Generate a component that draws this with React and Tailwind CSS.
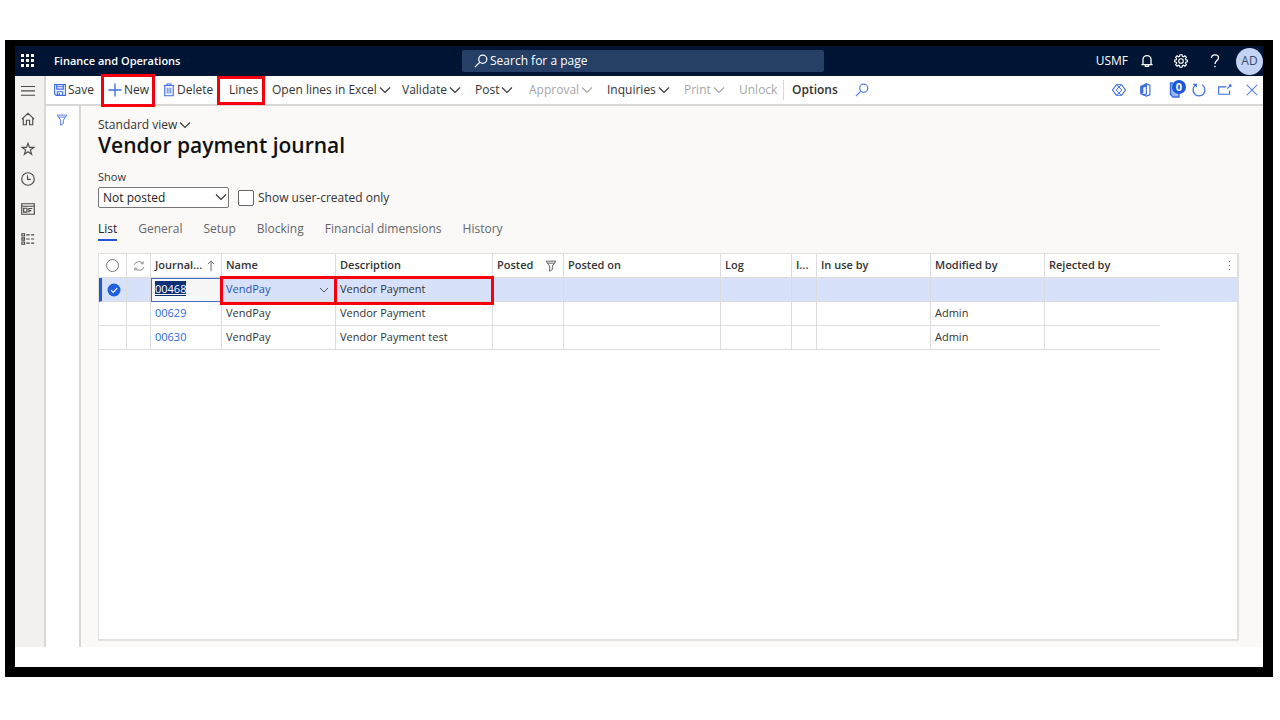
import { useState } from 'react'

function Svg({ size = 'size-4', children, className = '', box = 16 }) {
  return (
    <svg
      viewBox={`0 0 ${box} ${box}`}
      className={`${size} shrink-0 ${className}`}
      fill="none"
      stroke="currentColor"
      strokeWidth="1.1"
      aria-hidden="true"
    >
      {children}
    </svg>
  )
}

const Chevron = ({ className = '' }) => (
  <svg viewBox="0 0 12 8" className={`h-2 w-3 shrink-0 ${className}`} fill="none" stroke="currentColor" strokeWidth="1.1" aria-hidden="true">
    <path d="M1 1.5 6 6.5 11 1.5" />
  </svg>
)

const Funnel = ({ className = '' }) => (
  <Svg size="size-3" className={className}>
    <path d="M1.5 1.5h13L9.8 8.2v4.6L6.2 15V8.2z M3.4 4.2h9.2" strokeWidth="1.2" />
  </Svg>
)

const Magnifier = ({ className = '' }) => (
  <Svg size="size-3.5" className={className}>
    <circle cx="10" cy="6" r="4.6" strokeWidth="1.4" />
    <path d="M6.6 9.4 1 15" strokeWidth="1.4" />
  </Svg>
)

const Highlight = ({ className }) => (
  <span className={`pointer-events-none absolute z-10 border-3 border-[#f5000c] ${className}`} />
)

const commands = [
  {
    label: 'Save',
    width: 'w-[54px]',
    icon: (
      <Svg size="size-3">
        <path d="M.8.8h14.4v14.4H3L.8 13z M3.6.8v6h8.8v-6 M4.4 15v-4.6h7.2V15 M7 12v3 M3.6 3.6h8.8" strokeWidth="1.5" />
      </Svg>
    ),
  },
  {
    label: 'New',
    width: 'w-[55px]',
    mark: '-left-[7px] -top-0.5 h-[33px] w-[54px]',
    icon: (
      <Svg size="size-3.5">
        <path d="M8 .5v15M.5 8h15" strokeWidth="1.5" />
      </Svg>
    ),
  },
  {
    label: 'Delete',
    width: 'w-[66px]',
    icon: (
      <Svg size="h-3.5 w-3">
        <path d="M1 2h14 M5.4 1.8V0h5.2v1.8 M2.4 2.2v13.4h11.2V2.2" strokeWidth="1.5" />
        <path d="M5.6 4.8v8M8 4.8v8M10.4 4.8v8" strokeWidth="1.2" />
      </Svg>
    ),
  },
  { label: 'Lines', width: 'w-[43px]', mark: '-left-3 top-0 h-[29px] w-12' },
  { label: 'Open lines in Excel', width: 'w-[130px]', menu: true },
  { label: 'Validate', width: 'w-[73px]', menu: true },
  { label: 'Post', width: 'w-[54px]', menu: true },
  { label: 'Approval', width: 'w-[78px]', menu: true, disabled: true },
  { label: 'Inquiries', width: 'w-[77px]', menu: true },
  { label: 'Print', width: 'w-[55px]', menu: true, disabled: true },
  { label: 'Unlock', width: 'w-11', disabled: true },
]

const tabs = ['List', 'General', 'Setup', 'Blocking', 'Financial dimensions', 'History']

const journals = [
  { number: '00468', name: 'VendPay', description: 'Vendor Payment', modifiedBy: '' },
  { number: '00629', name: 'VendPay', description: 'Vendor Payment', modifiedBy: 'Admin' },
  { number: '00630', name: 'VendPay', description: 'Vendor Payment test', modifiedBy: 'Admin' },
]

function TopBar() {
  return (
    <header className="flex h-[30px] items-center bg-[#001433] text-white">
      <div className="flex flex-1 items-center">
        <button aria-label="App launcher" className="ml-1.5 flex size-4 items-center">
          <svg viewBox="0 0 14 14" className="size-3.5" fill="currentColor" aria-hidden="true">
            {[0, 5, 10].map((y) => [0, 5, 10].map((x) => <rect key={`${x}-${y}`} x={x} y={y} width="3" height="3" />))}
          </svg>
        </button>
        <span className="ml-[17px] text-[11px] font-semibold">Finance and Operations</span>
      </div>
      <label className="ml-2 flex h-[22px] w-[362px] items-center gap-0.5 rounded-xs bg-[#253f66] pl-3">
        <Magnifier />
        <input
          type="text"
          aria-label="Search for a page"
          placeholder="Search for a page"
          className="min-w-0 flex-1 bg-transparent text-xs outline-none placeholder:text-white"
        />
      </label>
      <div className="flex flex-1 items-center justify-end">
        <span className="text-xs">USMF</span>
        <button aria-label="Notifications" className="ml-3">
          <Svg size="size-3.5">
            <path d="M3.4 12V6.4a4.6 4.6 0 0 1 9.2 0V12 M1.6 12.2h12.8 M6.2 12.4v1.8h3.6v-1.8" strokeWidth="1.5" />
          </Svg>
        </button>
        <button aria-label="Settings" className="ml-5">
          <Svg size="size-3.5">
            <path
              d="M6.8.8h2.4l.4 1.9 1.2.5 1.7-1.1 1.6 1.6-1.1 1.7.5 1.2 1.9.4v2l-1.9.4-.5 1.2 1.1 1.7-1.6 1.6-1.7-1.1-1.2.5-.4 1.9H6.8l-.4-1.9-1.2-.5-1.7 1.1-1.6-1.6L3 10.6l-.5-1.2L.6 9V7l1.9-.4L3 5.4 1.9 3.7l1.6-1.6 1.7 1.1 1.2-.5z"
              strokeWidth="1.3"
            />
            <circle cx="8" cy="8" r="2.6" strokeWidth="1.3" />
          </Svg>
        </button>
        <button aria-label="Help" className="ml-5">
          <Svg size="size-3.5">
            <path d="M4 4.6C4 2.3 5.6 1 8 1s4 1.4 4 3.5C12 7.5 8 7.5 8 11.5 M8 13.4v1.8" strokeWidth="1.5" />
          </Svg>
        </button>
        <button className="ml-3.5 flex size-[27px] items-center justify-center rounded-full bg-[#c3d3f5] text-xs text-[#3a4a6a]">AD</button>
      </div>
    </header>
  )
}

function SideNav() {
  const button = 'flex h-[30px] w-full items-center justify-center'
  return (
    <nav aria-label="Main" className="w-[31px] shrink-0 border-r-2 border-[#d8d7d6] bg-[#f2f1f0] pr-1 text-[#4a4a4a]">
      <button aria-label="Expand menu" className="flex h-7 w-full items-center justify-center">
        <Svg size="size-3.5">
          <path d="M0 4h16M0 9h16M0 14h16" strokeWidth="1.3" />
        </Svg>
      </button>
      <button aria-label="Home" className={button}>
        <Svg size="size-3.5">
          <path d="M1 8.2 8 1.6l7 6.6 M2.6 7v7.6h3.6V9.4h3.6v5.2h3.6V7" strokeWidth="1.3" />
        </Svg>
      </button>
      <button aria-label="Favorites" className={button}>
        <Svg size="size-3.5">
          <path d="m8 1.5 1.7 4.7h5l-4 3 1.5 4.9L8 11.2l-4.2 2.9 1.5-4.9-4-3h5z" strokeWidth="1.3" />
        </Svg>
      </button>
      <button aria-label="Recent" className={button}>
        <Svg size="size-3.5">
          <circle cx="8" cy="8" r="7.2" strokeWidth="1.3" />
          <path d="M7.5 3.6v4.9h3.6" strokeWidth="1.3" />
        </Svg>
      </button>
      <button aria-label="Workspaces" className={button}>
        <Svg size="size-3.5">
          <path d="M.8 2h14.4v12H.8z M.8 4.8h14.4 M3 7.2h3.8v4.4H3z M9 12V7.4h4 M9 9.8h2.8" strokeWidth="1.3" />
        </Svg>
      </button>
      <button aria-label="Modules" className={button}>
        <Svg size="size-3.5">
          <path d="M1 2h3v2.6H1z M1 6.7h3v2.6H1z M1 11.4h3V14H1z M6 3.3h4M11.5 3.3H15M6 8h4M11.5 8H15M6 12.7h4M11.5 12.7H15" strokeWidth="1.3" />
        </Svg>
      </button>
    </nav>
  )
}

function CommandBar() {
  return (
    <div role="toolbar" aria-label="Actions" className="flex h-[30px] shrink-0 items-stretch border-b-2 border-[#d8d7d6] bg-white pl-2 text-xs text-[#333]">
      {commands.map((c) => (
        <button
          key={c.label}
          disabled={c.disabled}
          className={`relative flex shrink-0 items-center gap-0.5 whitespace-nowrap disabled:text-[#a6a6a6] ${c.width}`}
        >
          {c.icon && <span className="text-[#3c6be0]">{c.icon}</span>}
          {c.label}
          {c.menu && <Chevron />}
          {c.mark && <Highlight className={c.mark} />}
        </button>
      ))}
      <div className="my-1 mr-2 w-px shrink-0 bg-[#d8d7d6]" />
      <button className="w-[63px] shrink-0 text-left font-semibold">Options</button>
      <button aria-label="Search actions" className="text-[#5b7fe8]">
        <Magnifier />
      </button>
      <div className="ml-auto flex items-center gap-3 pr-[5px] text-[#3c6be0]">
        <button aria-label="Power Apps">
          <Svg size="size-3.5">
            <path d="M5 2h6l4.4 6-4.4 6H5L.6 8z" strokeWidth="1.3" />
            <path d="m8 4.6 3.2 3.4L8 11.4 4.8 8z M5 2l3 2.6L11 2 M5 14l3-2.6 3 2.6" />
          </Svg>
        </button>
        <button aria-label="Open in Office">
          <Svg size="size-3.5">
            <path d="M9.5 1 3 3.6v8.8l2.6-1.2V4.8l4-1.2z" fill="currentColor" />
            <path d="M9.5 1 13.6 2.4v11.2L9.5 15 4 12.8h5.5z" strokeWidth="1.3" />
          </Svg>
        </button>
        <button aria-label="Attachments, 0" className="relative ml-1 h-4 w-[18px]">
          <Svg size="size-4">
            <path d="M5 1H2.5v11.5L5 15h6v-3" fill="#9db5f0" strokeWidth="1.4" />
          </Svg>
          <span className="absolute -top-0.5 left-1 flex size-3.5 items-center justify-center rounded-full bg-[#1a56db] text-[11px] font-bold text-white">0</span>
        </button>
        <button aria-label="Refresh" className="-ml-1.5">
          <Svg size="size-3.5">
            <path d="M11.5 2.1A6.8 6.8 0 1 1 4.5 2.1 M1.5 1.5h3.4v3.4" strokeWidth="1.4" />
          </Svg>
        </button>
        <button aria-label="Open in new window">
          <Svg size="size-3.5">
            <path d="M9.5 4.5H.8v8.3h12.4V8.5 M10.5 6.5 14 3.2" strokeWidth="1.3" />
            <circle cx="14" cy="3" r="1.5" fill="currentColor" stroke="none" />
          </Svg>
        </button>
        <button aria-label="Close" className="ml-0.5">
          <Svg size="size-3">
            <path d="M1 1l14 14M15 1 1 15" strokeWidth="1.4" />
          </Svg>
        </button>
      </div>
    </div>
  )
}

function JournalGrid({ selected, onSelect }) {
  const head = 'h-6 overflow-hidden border-r border-b border-[#dcdcdc] px-1 text-left font-semibold whitespace-nowrap'
  return (
    <div className="min-h-0 flex-1 border-2 border-t border-l border-[#e0e0e0] bg-white">
      <table className="w-full table-fixed border-separate border-spacing-0 text-[11px] text-[#333]">
        <colgroup>
          <col className="w-7" />
          <col className="w-6" />
          <col className="w-[71px]" />
          <col className="w-[114px]" />
          <col className="w-[157px]" />
          <col className="w-[71px]" />
          <col className="w-[157px]" />
          <col className="w-[71px]" />
          <col className="w-[25px]" />
          <col className="w-[114px]" />
          <col className="w-[114px]" />
          <col className="w-[115px]" />
          <col />
        </colgroup>
        <thead>
          <tr>
            <th className={head}>
              <button aria-label="Select all" className="mx-auto block size-[13px] rounded-full border border-[#777]" />
            </th>
            <th className={head}>
              <Svg size="size-3" className="mx-auto text-[#888]">
                <path d="M1.5 6.5a6.5 5.5 0 0 1 12-1.5V1.8 M13.5 5h-3.2 M14.5 9.5a6.5 5.5 0 0 1-12 1.5v3.2 M2.5 11h3.2" strokeWidth="1.3" />
              </Svg>
            </th>
            <th className={head}>
              <div className="flex items-center justify-between">
                Journal...
                <Svg size="size-3" className="text-[#666]">
                  <path d="M8 15V1.5M3.8 5.5 8 1.3l4.2 4.2" strokeWidth="1.3" />
                </Svg>
              </div>
            </th>
            <th className={head}>Name</th>
            <th className={head}>Description</th>
            <th className={head}>
              <div className="flex items-center justify-between pr-0.5">
                Posted
                <Funnel className="text-[#555]" />
              </div>
            </th>
            <th className={head}>Posted on</th>
            <th className={head}>Log</th>
            <th className={head}>I...</th>
            <th className={head}>In use by</th>
            <th className={head}>Modified by</th>
            <th className="h-6 border-b border-[#dcdcdc] px-1 text-left font-semibold">Rejected by</th>
            <th className="h-6 border-b border-[#dcdcdc]">
              <button aria-label="Grid options" className="mr-1 ml-auto flex w-2 flex-col items-center gap-[3px]">
                <span className="size-px bg-[#777]" />
                <span className="size-px bg-[#777]" />
                <span className="size-px bg-[#777]" />
              </button>
            </th>
          </tr>
        </thead>
        <tbody>
          {journals.map((row, i) => {
            const on = i === selected
            const cell = `h-6 whitespace-nowrap border-r border-b border-[#dcdcdc] py-0 px-1 ${on ? 'bg-[#d7e2fa]' : ''}`
            return (
              <tr key={row.number} onClick={() => onSelect(i)}>
                <td className={`${cell} ${on ? 'border-l-3 border-l-[#2257d6]' : ''}`}>
                  {on && (
                    <svg viewBox="0 0 14 14" className="mx-auto size-3.5" aria-label="Selected">
                      <circle cx="7" cy="7" r="6.5" fill="#1f5fe0" />
                      <path d="m4 7.2 2.2 2.2 4-4.2" fill="none" stroke="#fff" strokeWidth="1.2" />
                    </svg>
                  )}
                </td>
                <td className={cell} />
                <td
                  className={
                    on
                      ? 'h-6 border-r border-b border-[#dcdcdc] bg-[#f7f7f8] px-1 py-0 outline outline-1 -outline-offset-1 outline-[#4a6fc4]'
                      : cell
                  }
                >
                  <a href="#journal" className={on ? 'bg-[#0d2f7a] text-white underline' : 'text-[#2b67e0]'}>
                    {row.number}
                  </a>
                </td>
                <td className={`${cell} relative`}>
                  <div className={`flex items-center justify-between pr-0.5 ${on ? 'text-[#2853b8]' : ''}`}>
                    {row.name}
                    {on && (
                      <button aria-label="Choose name" className="text-[#555]">
                        <svg viewBox="0 0 10 6" className="h-1.5 w-2.5" fill="none" stroke="currentColor" aria-hidden="true">
                          <path d="m1 1 4 4 4-4" />
                        </svg>
                      </button>
                    )}
                  </div>
                  {on && <Highlight className="-top-0.5 -left-0.5 h-[29px] w-[117px]" />}
                </td>
                <td className={`${cell} relative`}>
                  {row.description}
                  {on && <Highlight className="-top-0.5 -left-0.5 h-[29px] w-[160px]" />}
                </td>
                <td className={cell} />
                <td className={cell} />
                <td className={cell} />
                <td className={cell} />
                <td className={cell} />
                <td className={cell}>{row.modifiedBy}</td>
                <td className={`h-6 border-b border-[#dcdcdc] ${on ? 'bg-[#d7e2fa]' : ''}`} />
                <td className={on ? 'bg-[#d7e2fa]' : ''} />
              </tr>
            )
          })}
        </tbody>
      </table>
    </div>
  )
}

function App() {
  const [selected, setSelected] = useState(0)
  const [activeTab, setActiveTab] = useState('List')

  return (
    <div className="flex min-h-screen flex-col bg-white pt-10 pr-[7px] pb-[43px] pl-[5px] font-['Open_Sans','Noto_Sans',sans-serif]">
      <div className="flex flex-1 flex-col border-x-10 border-t-6 border-b-10 border-black">
        <TopBar />
        <div className="mb-5 flex flex-1">
          <SideNav />
          <div className="flex min-w-0 flex-1 flex-col">
            <CommandBar />
            <div className="flex flex-1">
              <aside className="w-[35px] shrink-0 border-r-2 border-[#d8d7d6] bg-white">
                <button aria-label="Show filters" className="mt-2 ml-2.5 block text-[#4a74e0]">
                  <Funnel />
                </button>
              </aside>
              <main className="flex min-w-0 flex-1 flex-col bg-[#faf9f8] pr-6 pb-1.5 pl-[17px] text-xs text-[#333]">
                <button className="mt-[11px] flex h-4 items-center gap-0.5 self-start">
                  Standard view
                  <Chevron />
                </button>
                <h1 className="text-[21px] leading-6 font-semibold text-[#111]">Vendor payment journal</h1>
                <label htmlFor="show" className="mt-3 text-[11px] leading-4">
                  Show
                </label>
                <div className="mt-0.5 flex h-[21px] items-center">
                  <div className="relative">
                    <select id="show" className="block h-[21px] w-[131px] appearance-none rounded-xs border border-[#777] bg-white pl-1 text-[#222]">
                      <option>Not posted</option>
                    </select>
                    <Chevron className="pointer-events-none absolute top-1.5 right-0.5" />
                  </div>
                  <input id="mine" type="checkbox" className="ml-[9px] size-4 appearance-none rounded-xs border border-[#666] bg-white checked:bg-[#2257d6]" />
                  <label htmlFor="mine" className="ml-1">
                    Show user-created only
                  </label>
                </div>
                <div role="tablist" className="mt-3 flex gap-[21px]">
                  {tabs.map((t) => (
                    <button
                      key={t}
                      role="tab"
                      aria-selected={activeTab === t}
                      onClick={() => setActiveTab(t)}
                      className={`h-[21px] border-b-2 pb-0.5 leading-4 ${
                        activeTab === t ? 'border-[#2257d6] text-[#222]' : 'border-transparent text-[#666]'
                      }`}
                    >
                      {t}
                    </button>
                  ))}
                </div>
                <div className="mt-3 flex flex-1 flex-col">
                  <JournalGrid selected={selected} onSelect={setSelected} />
                </div>
              </main>
            </div>
          </div>
        </div>
      </div>
    </div>
  )
}

export default App
